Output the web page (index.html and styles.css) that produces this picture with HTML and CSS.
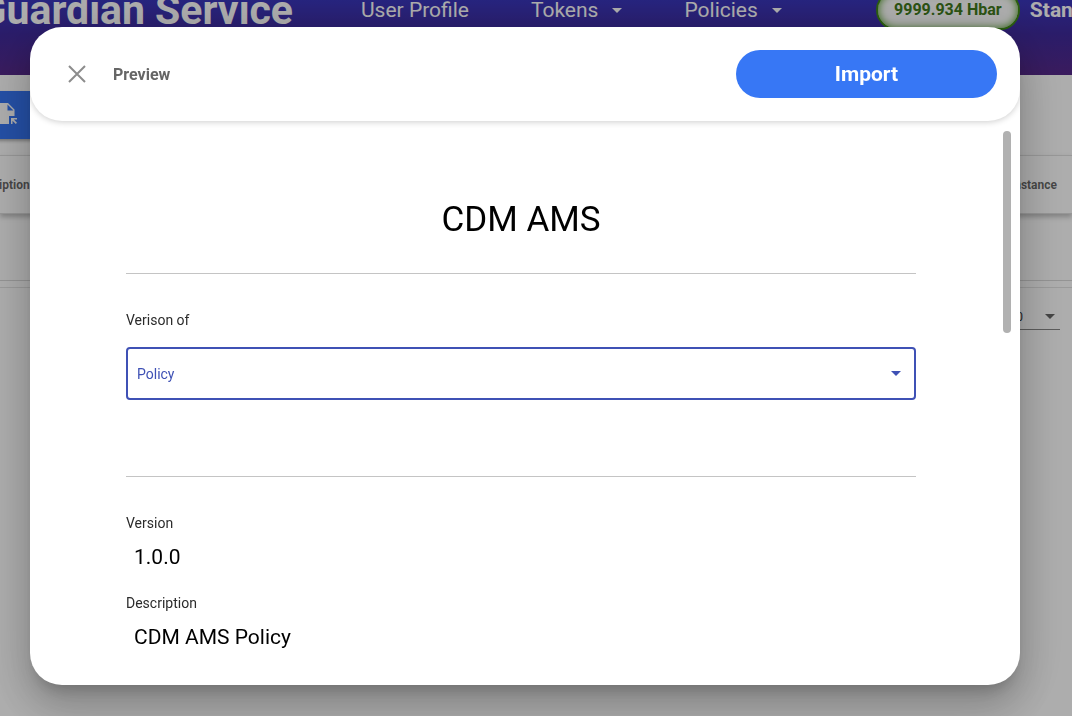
FILE: index.html
```html
<!DOCTYPE html>
<html lang="en">
<head>
<meta charset="utf-8">
<title>Guardian Service</title>
<link rel="stylesheet" href="styles.css">
</head>
<body>
<div class="page">
  <header class="appbar">
    <div class="appbar-row">
      <div class="brand">Guardian Service</div>
      <nav class="nav">
        <a class="nav-link" href="#profile">User Profile</a>
        <a class="nav-link" href="#tokens">Tokens<svg class="caret" viewBox="0 0 10 5" aria-hidden="true"><path d="M0 0h10L5 5z"/></svg></a>
        <a class="nav-link" href="#policies">Policies<svg class="caret" viewBox="0 0 10 5" aria-hidden="true"><path d="M0 0h10L5 5z"/></svg></a>
      </nav>
      <div class="balance">9999.934 Hbar</div>
      <div class="user">Standard</div>
    </div>
  </header>
  <main>
    <div class="toolbar">
      <button class="toolbar-button" type="button">
        <svg class="file-icon" viewBox="0 0 24 24" aria-hidden="true"><path d="M0 0h12l6.500 6.500V13H13v8H0zM11.500 1.500v6h6zM15 15h6v1.500h-3.200l3.200 3.200-1.200 1.200-3.300-3.200V21H15z"/></svg>
        Import
      </button>
    </div>
    <div class="table-head"><span class="head-description">Description</span><span class="head-instance">Instance</span></div>
    <div class="table-row"></div>
    <div class="paginator"><button class="page-size" type="button">10<svg class="caret" viewBox="0 0 10 5" aria-hidden="true"><path d="M0 0h10L5 5z"/></svg></button></div>
  </main>
</div>
<div class="backdrop">
  <section class="dialog" role="dialog" aria-modal="true" aria-labelledby="dialog-title">
    <header class="dialog-header">
      <button class="close" type="button" aria-label="Close"><svg viewBox="0 0 18 18" aria-hidden="true"><path d="M1 1l16 16M17 1L1 17"/></svg></button>
      <h2 class="dialog-title" id="dialog-title">Preview</h2>
      <button class="import" type="button">Import</button>
    </header>
    <div class="dialog-body">
      <div class="content">
        <h1 class="policy-name">CDM AMS</h1>
        <div class="section">
          <label class="label" for="policy">Verison of</label>
          <div class="select-box">
            <select class="select" id="policy"><option>Policy</option></select>
            <svg class="caret select-caret" viewBox="0 0 10 5" aria-hidden="true"><path d="M0 0h10L5 5z"/></svg>
          </div>
        </div>
        <dl class="details">
          <dt class="label">Version</dt>
          <dd class="value">1.0.0</dd>
          <dt class="label">Description</dt>
          <dd class="value">CDM AMS Policy</dd>
        </dl>
      </div>
      <div class="scrollbar"><div class="thumb"></div></div>
    </div>
  </section>
</div>
</body>
</html>
```
FILE: styles.css
```css
* { box-sizing: border-box; }
body { margin: 0; font-family: Roboto, "Liberation Sans", sans-serif; background: #fff; overflow: hidden; }
button { font: inherit; border: 0; cursor: pointer; }
h1, h2, dl, dd { margin: 0; }

.page { min-height: 100vh; overflow: hidden; }
.appbar { height: 75px; overflow: hidden; color: #fff; background: linear-gradient(#3a36bc, #3f2a9c 45%, #56298a); }
.appbar-row { display: flex; align-items: center; height: 60px; margin-top: -20px; }
.brand { display: flex; flex: none; justify-content: flex-end; width: 293px; font-size: 41px; font-weight: 700; white-space: nowrap; }
.nav { display: flex; flex: none; gap: 62px; margin-left: 68px; }
.nav-link { display: flex; align-items: center; color: inherit; font-size: 21px; text-decoration: none; white-space: nowrap; }
.caret { width: 10px; height: 5px; fill: currentColor; }
.nav-link .caret { margin-left: 14px; }
.balance { flex: none; width: 144px; height: 40px; margin-left: 94px; border: 2px solid #3f8a16; border-radius: 20px; background: #fff; box-shadow: inset 0 0 8px #4c9a20; color: #417a1c; font-size: 16px; font-weight: 700; line-height: 36px; text-align: center; }
.user { margin-left: 10px; font-size: 21px; font-weight: 700; }

.toolbar { padding: 16px 0; }
.toolbar-button { display: flex; align-items: center; gap: 9px; height: 48px; margin-left: -20px; padding: 0 16px; color: #fff; background: #3676f5; box-shadow: 0 2px 3px rgba(0, 0, 0, .3); font-size: 16px; }
.file-icon { width: 24px; height: 24px; fill: currentColor; fill-rule: evenodd; }
.table-head { display: flex; align-items: center; justify-content: space-between; height: 59px; padding-right: 15px; border-top: 1px solid #e0e0e0; border-bottom: 1px solid #ddd; box-shadow: 0 3px 5px rgba(0, 0, 0, .25); color: rgba(0, 0, 0, .6); font-size: 12px; font-weight: 700; }
.head-description { margin-left: -32px; }
.table-row { height: 67px; border-bottom: 1px solid #dadada; }
.paginator { display: flex; justify-content: flex-end; margin-top: 6px; padding: 16px 12px; border-top: 1px solid #e4e4e4; }
.page-size { display: flex; align-items: center; gap: 22px; height: 26px; padding: 0 5px; background: transparent; border-bottom: 1px solid #888; color: #333; font-size: 12px; }
.page-size .caret { color: #666; }

.backdrop { position: fixed; inset: 0; display: flex; padding: 27px 52px 31px 30px; background: rgba(0, 0, 0, .32); }
.dialog { display: flex; flex: 1; flex-direction: column; min-width: 0; overflow: hidden; border-radius: 32px; background: #fff; box-shadow: 0 11px 15px -7px rgba(0, 0, 0, .2), 0 24px 38px 3px rgba(0, 0, 0, .14), 0 9px 46px 8px rgba(0, 0, 0, .12); }
.dialog-header { display: flex; flex: none; align-items: center; gap: 20px; padding: 23px 23px 23px 31px; border-radius: 32px; box-shadow: 0 1px 6px rgba(0, 0, 0, .2); }
.close { display: grid; place-items: center; width: 32px; height: 32px; padding: 0; background: transparent; }
.close svg { width: 18px; height: 18px; fill: none; stroke: #8c8c8c; stroke-width: 2; }
.dialog-title { flex: 1; color: #666; font-size: 16px; font-weight: 700; }
.import { width: 261px; height: 48px; border-radius: 24px; color: #fff; background: #3777f5; font-size: 21px; font-weight: 700; }
.dialog-body { display: flex; flex: 1; gap: 87px; min-height: 0; padding: 10px 9px 37px 96px; }
.content { flex: 1; min-width: 0; overflow: hidden; }
.policy-name { padding: 65px 0 29px; border-bottom: 1px solid #c4c4c4; font-size: 35px; font-weight: 400; line-height: 48px; text-align: center; }
.section { height: 203px; padding-top: 36px; border-bottom: 1px solid #c4c4c4; }
.label { display: block; color: #2b2b2b; font-size: 14px; line-height: 20px; }
.select-box { display: grid; align-items: center; margin-top: 17px; }
.select { grid-area: 1 / 1; width: 100%; height: 53px; padding: 0 9px; border: 2px solid #3f51b5; border-radius: 4px; appearance: none; background: #fff; color: #3f51b5; font: 14px Roboto, sans-serif; outline: 0; }
.select-caret { grid-area: 1 / 1; justify-self: end; margin-right: 15px; color: #3f51b5; pointer-events: none; }
.details { padding-top: 36px; }
.value { margin-bottom: 22px; padding: 10px 8px 0; font-size: 21px; line-height: 28px; }
.scrollbar { flex: none; width: 8px; }
.thumb { height: 39%; border-radius: 4px; background: #b1b1b1; }
```
